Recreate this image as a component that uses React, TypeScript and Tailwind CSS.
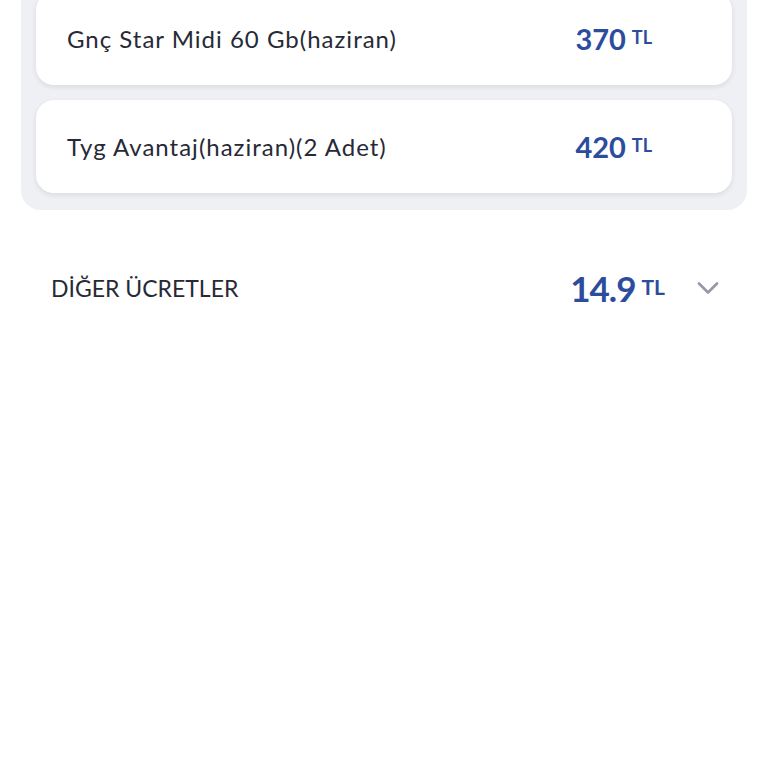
import { ChevronDown } from "lucide-react";

interface PackageLine {
  id: string;
  title: string;
  price: string;
}

const packages: PackageLine[] = [
  { id: "genc-star", title: "Gnç Star Midi 60 Gb(haziran)", price: "370" },
  { id: "tyg-avantaj", title: "Tyg Avantaj(haziran)(2 Adet)", price: "420" },
];

function Price({ amount, big }: { amount: string; big?: boolean }) {
  return (
    <div className="flex items-start gap-[6px] text-[#2c4c9c]">
      <span
        className={
          big
            ? "text-[35px] font-bold tracking-[-1px] leading-none"
            : "text-[29px] font-bold leading-none"
        }
      >
        {amount}
      </span>
      <span
        className={
          big
            ? "mt-[5px] text-[21px] font-bold leading-none"
            : "mt-[4px] text-[18px] font-bold leading-none"
        }
      >
        TL
      </span>
    </div>
  );
}

export default function App() {
  return (
    <div
      className="min-h-screen w-full bg-white text-[#272a36]"
      style={{ fontFamily: "Lato, 'Noto Sans', sans-serif" }}
    >
      {/* package list, scrolled so the first card is cut at the top */}
      <div className="mx-[21px] -mt-[8px] rounded-b-[20px] bg-[#eef0f3] px-[15px] pb-[17px]">
        <div className="flex flex-col gap-[15px]">
          {packages.map((p) => (
            <div
              key={p.id}
              className="flex h-[93px] items-center justify-between rounded-[18px] bg-white pl-[31px] pr-[80px] shadow-[0_2px_5px_rgba(30,40,70,0.10)]"
            >
              <span className="text-[24px] tracking-[1px] leading-none">{p.title}</span>
              <Price amount={p.price} />
            </div>
          ))}
        </div>
      </div>

      {/* other charges row */}
      <div className="mt-[60px] flex items-center justify-between pl-[51px] pr-[42px]">
        <span className="text-[23px] uppercase leading-none">DİĞER ÜCRETLER</span>
        <div className="flex items-center gap-[25px]">
          <Price amount="14.9" big />
          <ChevronDown className="h-[36px] w-[36px] text-[#969aa5]" strokeWidth={1.8} />
        </div>
      </div>
    </div>
  );
}
